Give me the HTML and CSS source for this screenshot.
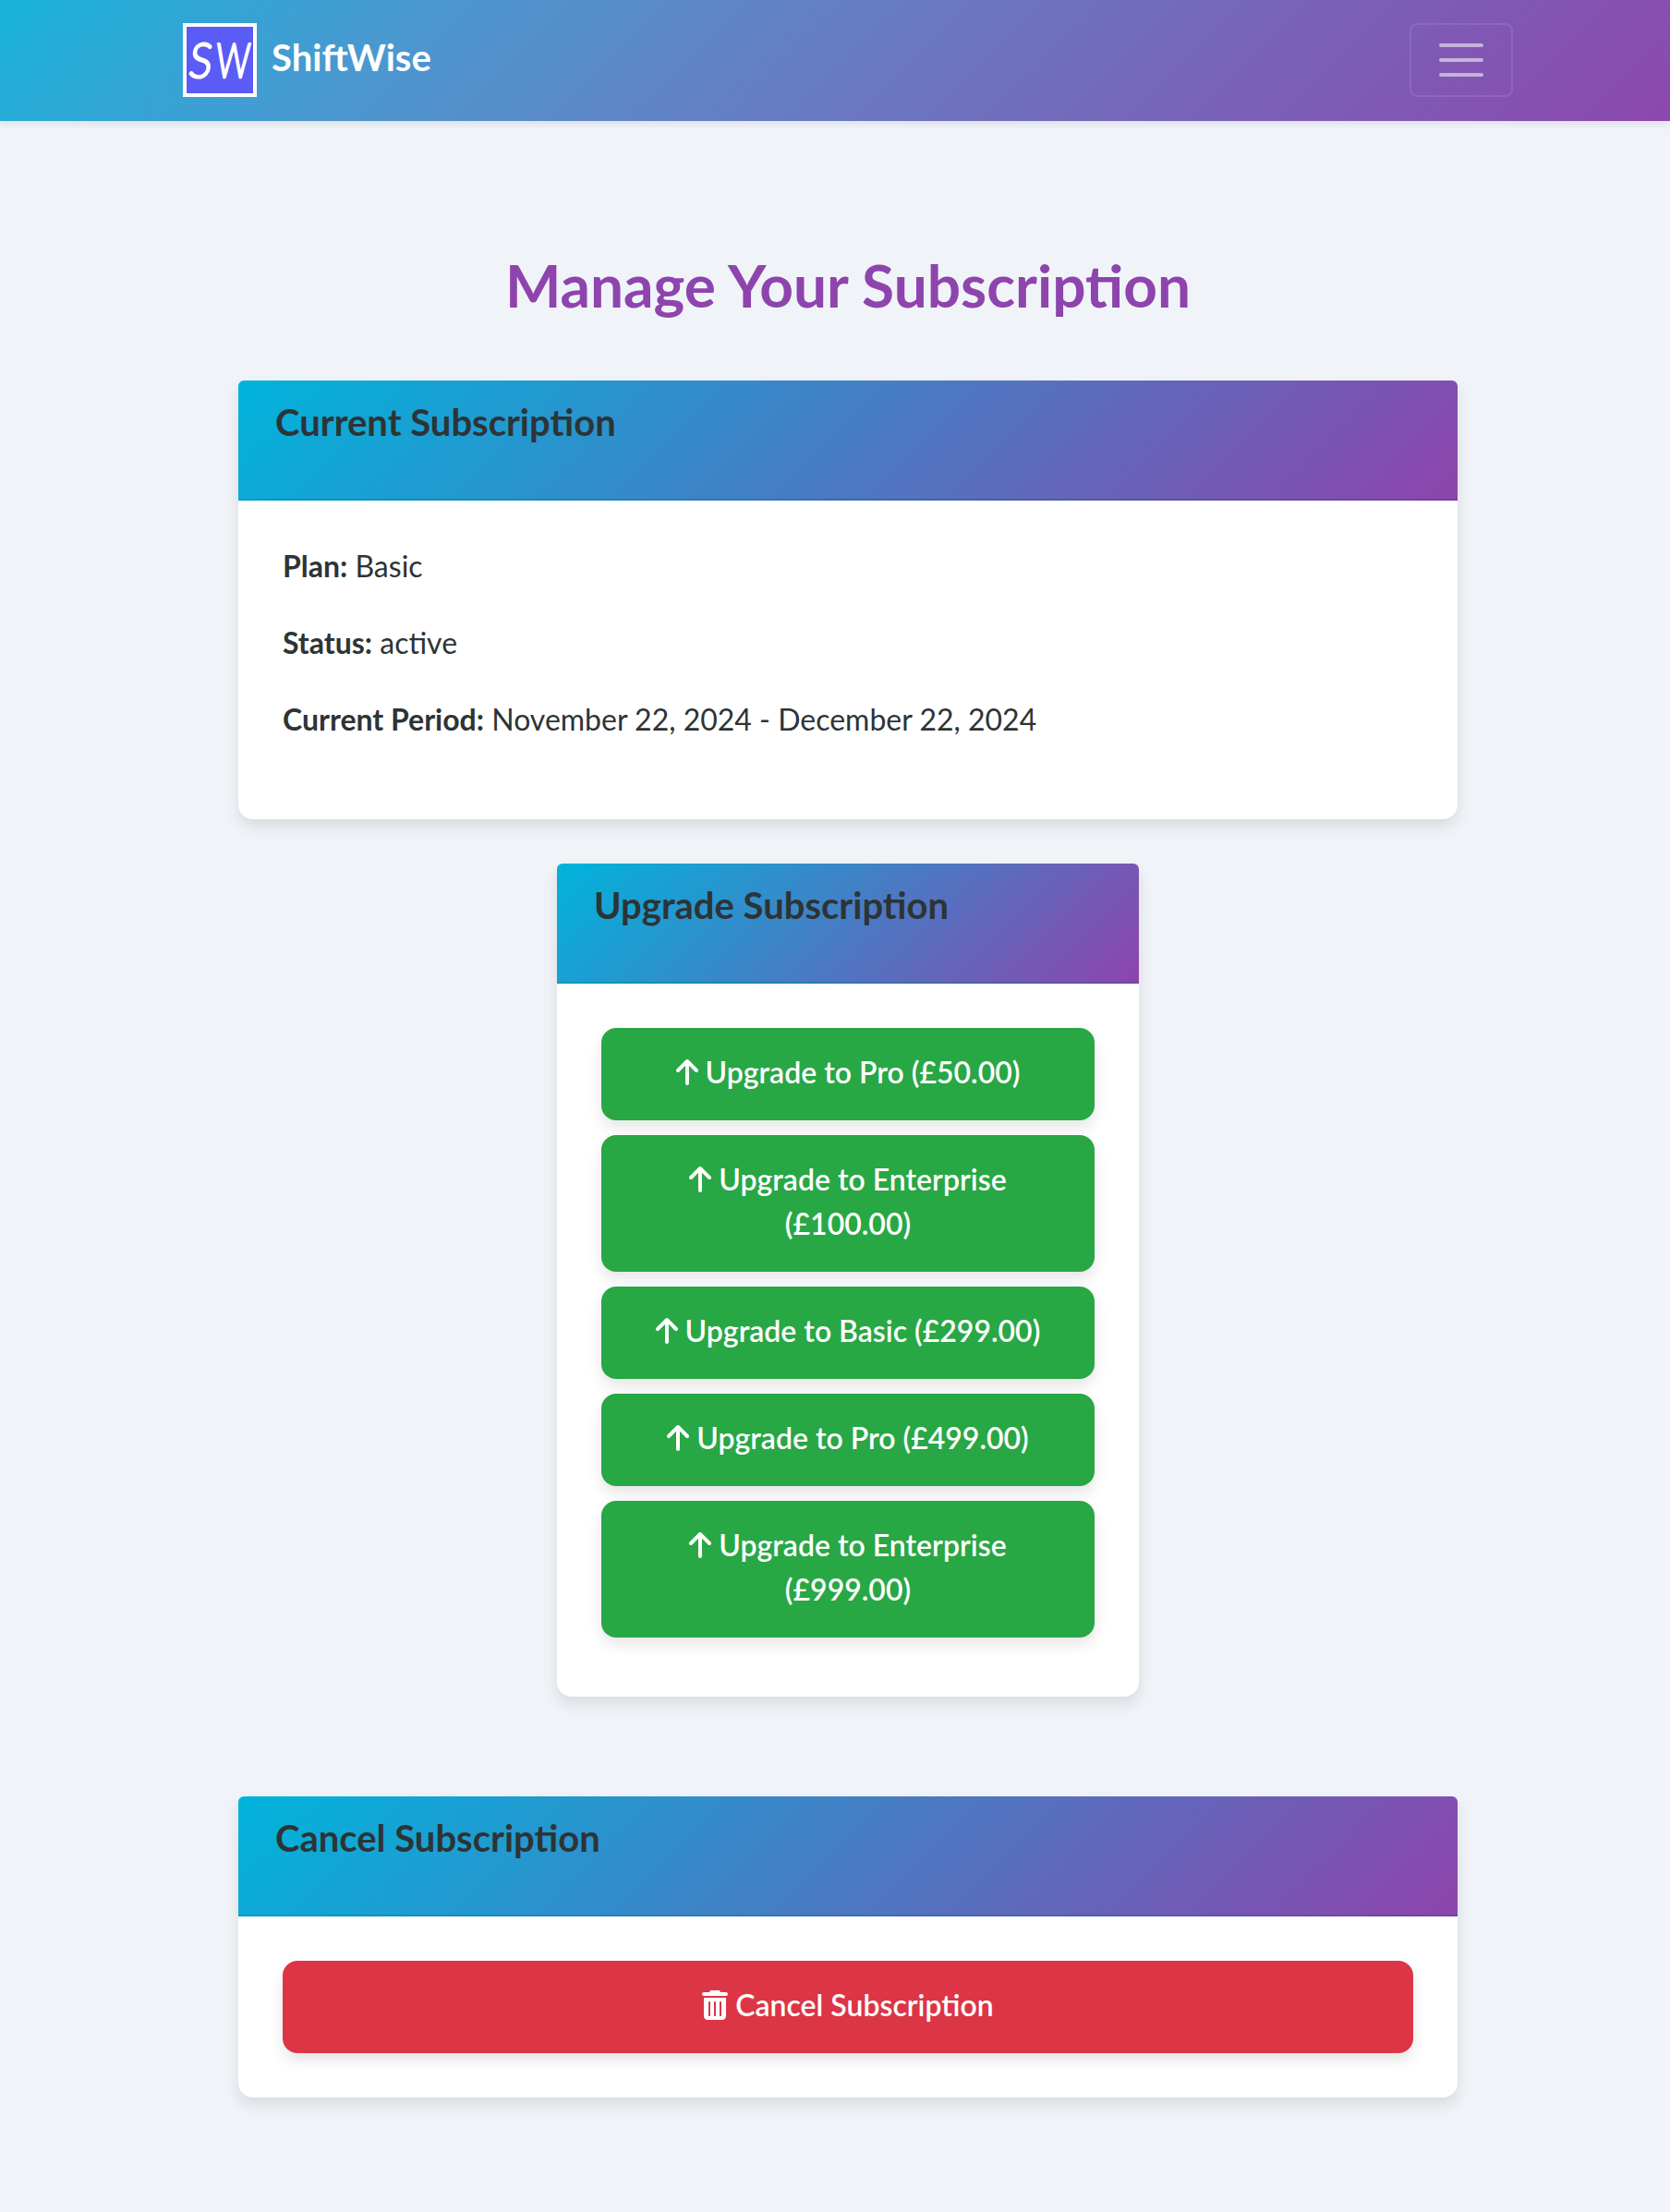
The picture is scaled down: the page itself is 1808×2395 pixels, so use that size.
FILE: index.html
```html
<!DOCTYPE html>
<html lang="en">
<head>
<meta charset="utf-8">
<title>Manage Your Subscription - ShiftWise</title>
<link rel="stylesheet" href="styles.css">
</head>
<body>
<svg class="sprite" aria-hidden="true">
  <symbol id="arrow-up" viewBox="0 0 384 512"><path d="M214.6 41.4c-12.5-12.5-32.8-12.5-45.3 0l-160 160c-12.5 12.5-12.5 32.8 0 45.3s32.8 12.5 45.3 0L160 141.2V448c0 17.7 14.3 32 32 32s32-14.3 32-32V141.2L329.4 246.6c12.5 12.5 32.8 12.5 45.3 0s12.5-32.8 0-45.3l-160-160z"/></symbol>
  <symbol id="trash" viewBox="0 0 448 512"><path d="M135.2 17.7C140.6 6.8 151.7 0 163.8 0H284.2c12.1 0 23.2 6.8 28.6 17.7L320 32h96c17.7 0 32 14.3 32 32s-14.3 32-32 32H32C14.3 96 0 81.7 0 64S14.3 32 32 32h96l7.2-14.3zM32 128H416V448c0 35.3-28.7 64-64 64H96c-35.3 0-64-28.7-64-64V128zm96 64c-8.8 0-16 7.2-16 16V432c0 8.8 7.2 16 16 16s16-7.2 16-16V208c0-8.8-7.2-16-16-16zm96 0c-8.8 0-16 7.2-16 16V432c0 8.8 7.2 16 16 16s16-7.2 16-16V208c0-8.8-7.2-16-16-16zm96 0c-8.8 0-16 7.2-16 16V432c0 8.8 7.2 16 16 16s16-7.2 16-16V208c0-8.8-7.2-16-16-16z"/></symbol>
</svg>
<nav class="navbar">
  <a class="brand">
    <svg class="logo" viewBox="0 0 80 80">
      <rect width="80" height="80" fill="#fff"/>
      <rect x="4" y="4" width="72" height="72" fill="#5b5bf6"/>
      <g class="logo-text">
        <text transform="translate(5 58.500) skewX(-7)" textLength="25" lengthAdjust="spacingAndGlyphs">S</text>
        <text transform="translate(35 58.500) skewX(-3)" textLength="37" lengthAdjust="spacingAndGlyphs">W</text>
      </g>
    </svg>
    <span>ShiftWise</span>
  </a>
  <button class="toggler" aria-label="Toggle navigation">
    <svg viewBox="0 0 30 30"><path d="M4 7h22M4 15h22M4 23h22"/></svg>
  </button>
</nav>
<main class="content">
  <h1 class="title">Manage Your Subscription</h1>
  <section class="card">
    <header class="card-header"><h2>Current Subscription</h2></header>
    <div class="card-body details">
      <p><strong>Plan:</strong> Basic</p>
      <p><strong>Status:</strong> active</p>
      <p><strong>Current Period:</strong> November 22, 2024 - December 22, 2024</p>
    </div>
  </section>
  <section class="card card-narrow">
    <header class="card-header"><h2>Upgrade Subscription</h2></header>
    <div class="card-body plans">
      <button class="btn btn-success"><svg class="icon-arrow"><use href="#arrow-up"/></svg> Upgrade to Pro (£50.00)</button>
      <button class="btn btn-success"><svg class="icon-arrow"><use href="#arrow-up"/></svg> Upgrade to Enterprise (£100.00)</button>
      <button class="btn btn-success"><svg class="icon-arrow"><use href="#arrow-up"/></svg> Upgrade to Basic (£299.00)</button>
      <button class="btn btn-success"><svg class="icon-arrow"><use href="#arrow-up"/></svg> Upgrade to Pro (£499.00)</button>
      <button class="btn btn-success"><svg class="icon-arrow"><use href="#arrow-up"/></svg> Upgrade to Enterprise (£999.00)</button>
    </div>
  </section>
  <section class="card">
    <header class="card-header"><h2>Cancel Subscription</h2></header>
    <div class="card-body">
      <button class="btn btn-danger"><svg class="icon-trash"><use href="#trash"/></svg> Cancel Subscription</button>
    </div>
  </section>
</main>
</body>
</html>
```
FILE: styles.css
```css
* { box-sizing: border-box; }
body {
  margin: 0;
  min-height: 2395px;
  background: #f0f4f8;
  color: #2d3436;
  font: 400 32px/1.6 Lato, sans-serif;
}
h1, h2, p { margin: 0; }
.sprite { display: none; }

.navbar {
  display: flex;
  justify-content: space-between;
  height: 131px;
  padding: 25px 170px 26px 198px;
  background: linear-gradient(135deg, #18b3da, #4a98d0 24%, #657fc4 47%, #7666b9 70%, #8c48ae);
  box-shadow: 0 4px 8px rgba(0, 0, 0, .075);
}
.brand {
  display: flex;
  align-items: center;
  gap: 16px;
  height: 80px;
  color: #fff;
  font-size: 40px;
  font-weight: 700;
  line-height: 48px;
}
.brand span { margin-top: -6px; }
.logo { width: 80px; height: 80px; overflow: visible; }
.logo-text {
  font-family: Lato, sans-serif;
  font-size: 52px;
  font-weight: 300;
  fill: #fff;
  stroke: #fff;
  stroke-width: 2.400px;
  stroke-linejoin: round;
}
.toggler {
  width: 112px;
  height: 80px;
  padding: 8px 24px;
  border: 2px solid rgba(255, 255, 255, .1);
  border-radius: 8px;
  background: none;
}
.toggler svg { display: block; width: 60px; height: 60px; }
.toggler path {
  fill: none;
  stroke: rgba(255, 255, 255, .55);
  stroke-width: 2;
  stroke-linecap: round;
}

.content {
  display: flex;
  flex-direction: column;
  align-items: center;
  width: 1320px;
  margin-left: 258px;
}
.title {
  margin: 139px 0 65px;
  color: #8e44ad;
  font-size: 64px;
  font-weight: 700;
  line-height: 77px;
}
.card {
  width: 100%;
  margin-bottom: 48px;
  border-radius: 6px 6px 16px 16px;
  background: #fff;
  box-shadow: 0 8px 16px rgba(0, 0, 0, .1);
}
.card-narrow { width: 630px; margin-bottom: 108px; }
.card-header {
  height: 130px;
  padding: 21px 40px;
  border-bottom: 2px solid rgba(0, 0, 0, .125);
  border-radius: 6px 6px 0 0;
  background: linear-gradient(135deg, #00b4db, #8e44ad);
}
.card-header h2 { font-size: 40px; font-weight: 700; line-height: 48px; }
.card-body { padding: 48px; }
.details {
  display: flex;
  flex-direction: column;
  gap: 32px;
  height: 345px;
  padding-top: 45px;
}
.plans { display: flex; flex-direction: column; gap: 16px; padding-bottom: 64px; }
.btn {
  display: block;
  width: 100%;
  padding: 24px 50px 28px;
  border: 0;
  border-radius: 16px;
  color: #fff;
  font: 600 32px/48px Lato, sans-serif;
  text-align: center;
  box-shadow: 0 8px 16px rgba(0, 0, 0, .1);
}
.btn svg { height: 32px; fill: currentColor; vertical-align: -4px; }
.icon-arrow { width: 24px; }
.icon-trash { width: 28px; }
.btn-success { background: #28a745; }
.btn-danger { background: #dc3545; }
```
